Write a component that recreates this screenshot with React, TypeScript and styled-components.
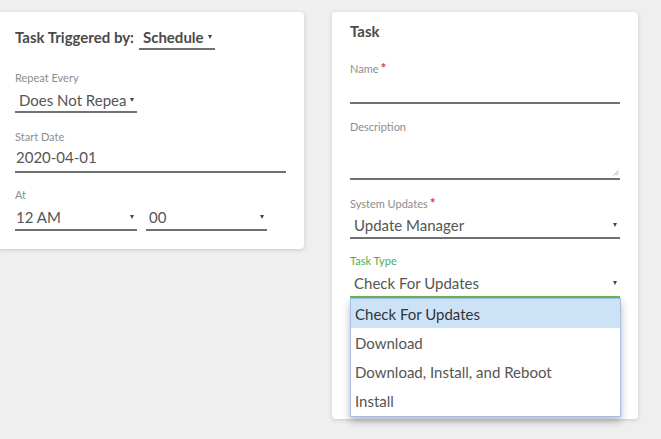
import React from "react";
import styled, { createGlobalStyle } from "styled-components";

const Global = createGlobalStyle`
  html, body { margin: 0; padding: 0; background: #efefef; }
  body { font-family: Lato, "Open Sans", Arial, sans-serif; -webkit-font-smoothing: antialiased; }
  * { box-sizing: border-box; }
`;

const Page = styled.div`
  display: flex;
  align-items: flex-start;
  gap: 28px;
  padding-top: 12px;
  width: 661px;
  height: 439px;
  overflow: hidden;
`;

const Card = styled.div<{ $width: number; $offset?: number; $pad: string }>`
  display: flex;
  flex-direction: column;
  width: ${(p) => p.$width}px;
  margin-left: ${(p) => p.$offset ?? 0}px;
  background: #fff;
  border-radius: 4px;
  box-shadow: 0 1px 4px rgba(0, 0, 0, 0.16);
  padding: ${(p) => p.$pad};
  flex-shrink: 0;
`;

const HeaderRow = styled.div`
  display: flex;
  align-items: flex-start;
  gap: 5px;
`;

const Title = styled.div`
  font-size: 15px;
  line-height: 18px;
  font-weight: 700;
  color: #4a4a4a;
`;

const Field = styled.div<{ $mt?: number }>`
  position: relative;
  display: flex;
  flex-direction: column;
  margin-top: ${(p) => p.$mt ?? 16}px;
`;

const Label = styled.div<{ $active?: boolean }>`
  display: flex;
  align-items: flex-start;
  gap: 2px;
  font-size: 11px;
  line-height: 14px;
  color: ${(p) => (p.$active ? "#4cae50" : "#8d8d8d")};
`;

const Required = styled.span`
  color: #d0454a;
  font-size: 14px;
  line-height: 12px;
  font-weight: 700;
`;

const SelectBox = styled.div<{
  $width?: number;
  $active?: boolean;
  $indent?: number;
  $pt?: number;
  $pb?: number;
  $bold?: boolean;
}>`
  display: flex;
  align-items: center;
  gap: 3px;
  width: ${(p) => (p.$width ? `${p.$width}px` : "100%")};
  padding: ${(p) => p.$pt ?? 5}px 3px ${(p) => p.$pb ?? 3}px ${(p) => p.$indent ?? 4}px;
  font-size: 15px;
  line-height: 18px;
  font-weight: ${(p) => (p.$bold ? 700 : 400)};
  color: ${(p) => (p.$bold ? "#4a4a4a" : "#555")};
  border-bottom: 2px solid ${(p) => (p.$active ? "#6cb55a" : "#717171")};
`;

const Value = styled.span`
  flex: 1;
  min-width: 0;
  white-space: nowrap;
  overflow: hidden;
`;

const Arrow = styled.span`
  flex: none;
  width: 0;
  height: 0;
  border-left: 2.5px solid transparent;
  border-right: 2.5px solid transparent;
  border-top: 4px solid #444;
`;

const TextInput = styled.div<{ $height?: number }>`
  position: relative;
  height: ${(p) => p.$height ?? 29}px;
  padding: 4px 0 5px 1px;
  font-size: 15px;
  line-height: 18px;
  color: #555;
  border-bottom: 2px solid #717171;
`;

const Grip = styled.svg`
  position: absolute;
  right: 1px;
  bottom: 2px;
`;

const Row = styled.div`
  display: flex;
  gap: 9px;
`;

const Menu = styled.div`
  position: absolute;
  left: 0;
  right: -1px;
  top: 100%;
  display: flex;
  flex-direction: column;
  background: #fff;
  border: 1px solid #a3bfe3;
  box-shadow: 0 4px 8px rgba(0, 0, 0, 0.28);
  z-index: 2;
`;

const MenuItem = styled.div<{ $selected?: boolean }>`
  height: 29.25px;
  display: flex;
  align-items: center;
  padding-left: 4px;
  font-size: 15px;
  color: ${(p) => (p.$selected ? "#333" : "#555")};
  background: ${(p) => (p.$selected ? "#cce3f7" : "#fff")};
`;

const options = ["Check For Updates", "Download", "Download, Install, and Reboot", "Install"];

type SelectProps = {
  value: string;
  width?: number;
  active?: boolean;
  indent?: number;
  pt?: number;
  pb?: number;
  bold?: boolean;
};

function Select({ value, width, active, indent, pt, pb, bold }: SelectProps) {
  return (
    <SelectBox $width={width} $active={active} $indent={indent} $pt={pt} $pb={pb} $bold={bold}>
      <Value>{value}</Value>
      <Arrow />
    </SelectBox>
  );
}

export default function App() {
  return (
    <>
      <Global />
      <Page>
        <Card $width={307} $offset={-3} $pad="16px 18px 18px 18px">
          <HeaderRow>
            <Title>Task Triggered by:</Title>
            <Select value="Schedule" width={76} bold pt={0} pb={2} indent={4} />
          </HeaderRow>

          <Field $mt={21}>
            <Label>Repeat Every</Label>
            <Select value="Does Not Repeat" width={122} pt={6} pb={2} indent={4} />
          </Field>

          <Field $mt={17}>
            <Label>Start Date</Label>
            <TextInput>2020-04-01</TextInput>
          </Field>

          <Field $mt={15}>
            <Label>At</Label>
            <Row>
              <Select value="12 AM" width={122} pt={6} pb={3} indent={1} />
              <Select value="00" width={121} pt={6} pb={3} indent={3} />
            </Row>
          </Field>
        </Card>

        <Card $width={306} $pad="10px 18px 121px 18px">
          <Title>Task</Title>

          <Field $mt={22}>
            <Label>
              Name<Required>*</Required>
            </Label>
            <TextInput $height={28} />
          </Field>

          <Field $mt={16}>
            <Label>Description</Label>
            <TextInput $height={46}>
              <Grip width="6" height="6" viewBox="0 0 6 6">
                <path d="M5.5 0.5 L0.5 5.5 M5.5 3 L3 5.5" stroke="#9a9a9a" strokeWidth="0.8" fill="none" />
              </Grip>
            </TextInput>
          </Field>

          <Field $mt={17}>
            <Label>
              System Updates<Required>*</Required>
            </Label>
            <Select value="Update Manager" pt={5} pb={3} />
          </Field>

          <Field $mt={15}>
            <Label $active>Task Type</Label>
            <Select value="Check For Updates" active pt={6} pb={4} />
            <Menu>
              {options.map((o, i) => (
                <MenuItem key={o} $selected={i === 0}>
                  {o}
                </MenuItem>
              ))}
            </Menu>
          </Field>
        </Card>
      </Page>
    </>
  );
}
